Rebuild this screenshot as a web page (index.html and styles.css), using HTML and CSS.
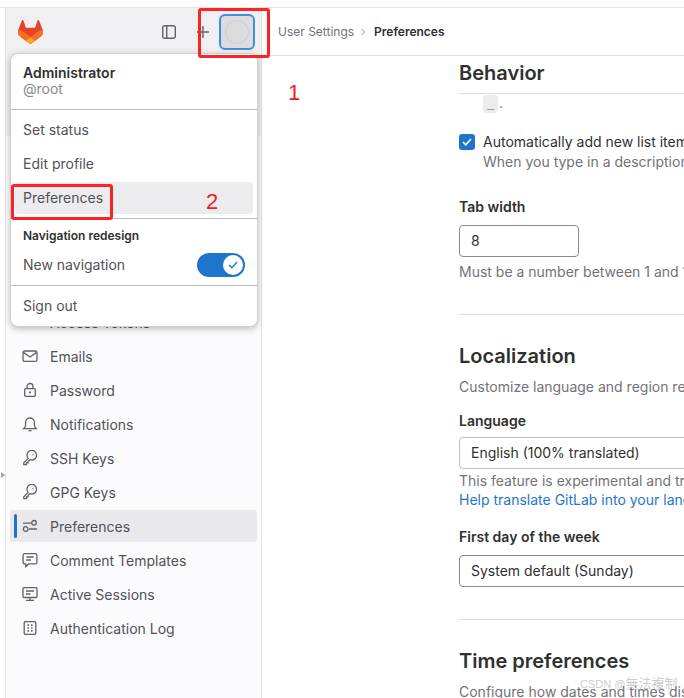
FILE: index.html
```html
<!DOCTYPE html>
<html lang="en">
<head>
  <meta charset="UTF-8">
  <meta name="viewport" content="width=device-width, initial-scale=1.0">
  <title>Preferences - User Settings</title>
  <link rel="stylesheet" href="styles.css">
</head>
<body>
  <div class="page">
    <aside class="sidebar">
      <div class="sidebar-top">
        <svg class="logo" width="25" height="24" viewBox="0 0 25 24">
          <path fill="#E24329" d="m24.507 9.5-.034-.09L21.082.562a.896.896 0 0 0-1.694.091l-2.29 7.01H7.825L5.535.653a.898.898 0 0 0-1.694-.09L.451 9.411.416 9.5a6.297 6.297 0 0 0 2.09 7.278l.012.01.03.022 5.16 3.867 2.56 1.935 1.554 1.176a1.051 1.051 0 0 0 1.268 0l1.555-1.176 2.56-1.935 5.197-3.89.014-.01A6.297 6.297 0 0 0 24.507 9.5Z"/>
          <path fill="#FC6D26" d="m24.507 9.5-.034-.09a11.44 11.44 0 0 0-4.56 2.051l-7.447 5.632 4.742 3.584 5.197-3.89.014-.01A6.297 6.297 0 0 0 24.507 9.5Z"/>
          <path fill="#FCA326" d="m7.707 20.677 2.56 1.935 1.555 1.176a1.051 1.051 0 0 0 1.268 0l1.555-1.176 2.56-1.935-4.743-3.584-4.755 3.584Z"/>
          <path fill="#FC6D26" d="M5.01 11.461a11.43 11.43 0 0 0-4.56-2.05L.416 9.5a6.297 6.297 0 0 0 2.09 7.278l.012.01.03.022 5.16 3.867 4.745-3.584-7.444-5.632Z"/>
        </svg>
        <svg class="panel-icon" width="16" height="16" viewBox="0 0 16 16" fill="none" stroke="#626168" stroke-width="1.4">
          <rect x="1.7" y="1.7" width="12.6" height="12.6" rx="2"/>
          <path d="M5.7 2v12"/>
        </svg>
        <svg class="plus-icon" width="14" height="14" viewBox="0 0 14 14" fill="none" stroke="#626168" stroke-width="1.4">
          <path d="M7 1v12M1 7h12"/>
        </svg>
        <div class="avatar-btn"><span class="avatar"></span></div>
      </div>

      <ul class="nav-list">
        <li class="nav-title">User settings</li>
        <li class="nav-item">Profile</li>
        <li class="nav-item">Account</li>
        <li class="nav-item">Applications</li>
        <li class="nav-item">Chat</li>
        <li class="nav-item">Access Tokens</li>
        <li class="nav-item">
          <svg class="nav-icon" viewBox="0 0 16 16"><rect x="1" y="3" width="14" height="10.4" rx="1.6"/><path d="M1.4 4.4 8 9l6.6-4.6"/></svg>
          Emails
        </li>
        <li class="nav-item">
          <svg class="nav-icon" viewBox="0 0 16 16"><rect x="2.7" y="6.6" width="10.6" height="7.7" rx="1"/><path d="M5 6.6V4.5a3 3 0 0 1 6 0v2.1"/><path d="M8 9.6v1.6" stroke-width="2"/></svg>
          Password
        </li>
        <li class="nav-item">
          <svg class="nav-icon" viewBox="0 0 16 16"><path d="M1.8 12.6c1.3-1 1.8-2 1.8-3.6V6.4a4.4 4.4 0 0 1 8.8 0V9c0 1.6.5 2.600 1.800 3.600z"/><path d="M6.500 14.700h3"/></svg>
          Notifications
        </li>
        <li class="nav-item">
          <svg class="nav-icon" viewBox="0 0 16 16"><path d="M6.200 8.400 1.800 12.800v1.800h2.600v-1.700h1.700v-1.700l2-1.500a4.800 4.800 0 1 0-1.900-1.300z"/><path d="M10.600 4.600h.9" stroke-width="1.800"/></svg>
          SSH Keys
        </li>
        <li class="nav-item">
          <svg class="nav-icon" viewBox="0 0 16 16"><path d="M6.200 8.400 1.800 12.800v1.800h2.600v-1.700h1.700v-1.700l2-1.500a4.800 4.800 0 1 0-1.900-1.300z"/><path d="M10.600 4.600h.9" stroke-width="1.800"/></svg>
          GPG Keys
        </li>
        <li class="nav-item active">
          <svg class="nav-icon" viewBox="0 0 16 16"><path d="M1 5.200h8M7 11h8"/><circle cx="12" cy="4.800" r="2.300"/><circle cx="3.700" cy="11" r="2.300"/></svg>
          Preferences
        </li>
        <li class="nav-item">
          <svg class="nav-icon" viewBox="0 0 16 16"><path d="M2.600 1.700h10.800a1.500 1.500 0 0 1 1.500 1.500v7.200a1.500 1.500 0 0 1-1.500 1.500H6.800l-3 2.700v-2.700H2.600a1.500 1.500 0 0 1-1.500-1.500V3.200a1.500 1.500 0 0 1 1.500-1.500z"/><path d="M4.300 5h7.400M4.300 8h4.700"/></svg>
          Comment Templates
        </li>
        <li class="nav-item">
          <svg class="nav-icon" viewBox="0 0 16 16"><rect x="1" y="1.700" width="14" height="9.800" rx="1"/><path d="M4 5h8M4 8h4.500M8 11.500V14M4 14.400h8"/></svg>
          Active Sessions
        </li>
        <li class="nav-item">
          <svg class="nav-icon" viewBox="0 0 16 16"><rect x="2.200" y="1.700" width="11.600" height="12.600" rx="1"/><path d="M5.500 5.200h1.500M9 5.200h1.500M5.500 8h1.500M9 8h1.500M5.500 10.800h1.500M9 10.800h1.500" stroke-width="1.700"/></svg>
          Authentication Log
        </li>
      </ul>
    </aside>

    <main class="main">
      <div class="breadcrumbs">
        <span class="crumb">User Settings</span>
        <svg class="crumb-sep" width="6" height="8" viewBox="0 0 6 8" fill="none" stroke="#8f8e94" stroke-width="1"><path d="M1.500 1 4.500 4 1.500 7"/></svg>
        <span class="crumb-current">Preferences</span>
      </div>

      <div class="content">
        <div class="sticky-title"><h2>Behavior</h2></div>
        <div class="code-line"><code>_</code>.</div>

        <div class="check-row">
          <span class="checkbox">
            <svg width="10" height="8" viewBox="0 0 10 8" fill="none" stroke="#fff" stroke-width="1.600"><path d="M1 4l2.800 2.800L9 1"/></svg>
          </span>
          <div>
            <div class="check-label">Automatically add new list items</div>
            <div class="hint">When you type in a description or comment box, pressing Enter in a list adds a new item below.</div>
          </div>
        </div>

        <label class="field-label tab-label">Tab width</label>
        <div class="input tab-input">8</div>
        <p class="hint tab-hint">Must be a number between 1 and 12. The default is 8.</p>

        <hr class="divider first">

        <h2 class="section-title">Localization</h2>
        <p class="hint section-desc">Customize language and region related settings.</p>

        <label class="field-label lang-label">Language</label>
        <div class="input select light">English (100% translated)</div>
        <p class="hint lang-hint">This feature is experimental and translations are not complete yet.</p>
        <a class="link" href="#">Help translate GitLab into your language.</a>

        <label class="field-label day-label">First day of the week</label>
        <div class="input select">System default (Sunday)</div>

        <hr class="divider second">

        <h2 class="section-title">Time preferences</h2>
        <p class="hint section-desc">Configure how dates and times display for you.</p>
      </div>
    </main>

    <!-- user dropdown, sits over the sidebar -->
    <div class="user-menu">
      <div class="menu-head">
        <div class="menu-name">Administrator</div>
        <div class="menu-handle">@root</div>
      </div>
      <div class="menu-group menu-links">
        <div class="menu-item">Set status</div>
        <div class="menu-item">Edit profile</div>
        <div class="menu-item hover">Preferences</div>
      </div>
      <div class="menu-group nav-group">
        <div class="menu-label">Navigation redesign</div>
        <div class="menu-item toggle-row">
          New navigation
          <span class="toggle">
            <span class="knob">
              <svg width="10" height="8" viewBox="0 0 10 8" fill="none" stroke="#1f75cb" stroke-width="1.300"><path d="M1 4l2.800 2.800L9 1"/></svg>
            </span>
          </span>
        </div>
      </div>
      <div class="menu-group last">
        <div class="menu-item">Sign out</div>
      </div>
    </div>

    <!-- screenshot annotations -->
    <div class="mark mark-avatar"></div>
    <div class="mark mark-pref"></div>
    <span class="mark-num num-one">1</span>
    <span class="mark-num num-two">2</span>
    <span class="collapse-arrow"></span>
    <span class="watermark">CSDN @<span class="watermark-cjk">無法複制</span></span>
  </div>
</body>
</html>
```

FILE: styles.css
```css
* {
  box-sizing: border-box;
}
html, body {
  margin: 0;
  padding: 0;
  background: #fff;
}
body {
  font-family: Inter, "Noto Sans", sans-serif;
  font-size: 14px;
  color: #303030;
}
.page {
  position: relative;
  display: flex;
  width: 684px;
  height: 698px;
  overflow: hidden;
  padding: 7px 0 0 5px;
}
.page::before {
  content: "";
  position: absolute;
  top: 7px;
  left: 0;
  right: 0;
  height: 1px;
  background: #e4e4e6;
}

/* sidebar */
.sidebar {
  flex: none;
  width: 257px;
  margin-top: 1px;
  background: #fbfafd;
  border-left: 1px solid #e4e4e6;
  border-right: 1px solid #e4e4e6;
}
.sidebar-top {
  display: flex;
  align-items: center;
  height: 128px;
  padding: 0 0 80px 12px;
  background: #f0f0f2;
}
.logo {
  flex: none;
}
.panel-icon {
  margin-left: 118px;
}
.plus-icon {
  margin-left: 19px;
}
.avatar-btn {
  display: flex;
  align-items: center;
  justify-content: center;
  width: 36px;
  height: 36px;
  margin-left: 9px;
  background: #dcdcde;
  border: 2px solid #428fdc;
  border-radius: 6px;
}
.avatar {
  width: 24px;
  height: 24px;
  background: #dcdcde;
  border: 1px solid #cfcfd3;
  border-radius: 50%;
}
.nav-list {
  list-style: none;
  margin: 0;
  padding: 0 4px;
}
.nav-title {
  height: 34px;
}
.nav-item {
  position: relative;
  display: flex;
  align-items: center;
  height: 32px;
  margin-bottom: 2px;
  padding: 1px 0 0 40px;
  border-radius: 4px;
  color: #535158;
}
.nav-icon {
  position: absolute;
  left: 12px;
  top: 8px;
  width: 16px;
  height: 16px;
  fill: none;
  stroke: #626168;
  stroke-width: 1.300;
}
.nav-item.active {
  background: #e9e9ec;
}
.nav-item.active::before {
  content: "";
  position: absolute;
  left: 4px;
  top: 4px;
  width: 3px;
  height: 24px;
  background: #1f75cb;
  border-radius: 2px;
}

/* main column */
.main {
  flex: 1;
  min-width: 0;
  margin-top: 1px;
}
.breadcrumbs {
  display: flex;
  align-items: center;
  height: 48px;
  padding-left: 16px;
  border-bottom: 1px solid #e0e0e2;
  font-size: 12px;
}
.crumb {
  color: #737278;
}
.crumb-sep {
  margin: 0 8px 0 6px;
}
.crumb-current {
  font-weight: 600;
  color: #303030;
}
.content {
  width: 222px;
  margin-left: 197px;
  white-space: nowrap;
}
h2 {
  margin: 0;
  font-size: 20px;
  font-weight: 600;
  line-height: 26px;
  color: #303030;
}
.sticky-title {
  width: 400px;
  height: 38px;
  padding-top: 4px;
  border-bottom: 1px solid #dcdcde;
}
.code-line {
  height: 18px;
  padding-left: 24px;
  line-height: 18px;
  color: #737278;
}
code {
  display: inline-block;
  width: 15px;
  height: 18px;
  margin-right: 1px;
  background: #ececef;
  border-radius: 4px;
  font-family: "Liberation Mono", monospace;
  font-size: 12px;
  text-align: center;
  line-height: 20px;
}
.check-row {
  display: flex;
  gap: 8px;
  margin-top: 20px;
}
.checkbox {
  flex: none;
  display: flex;
  align-items: center;
  justify-content: center;
  width: 16px;
  height: 16px;
  margin-top: 2px;
  background: #1f75cb;
  border-radius: 3px;
}
.check-label {
  line-height: 20px;
  color: #303030;
}
.hint {
  margin: 0;
  line-height: 20px;
  color: #737278;
}
.field-label {
  display: block;
  font-weight: 600;
  line-height: 20px;
  color: #303030;
}
.tab-label {
  margin-top: 25px;
}
.input {
  height: 32px;
  padding: 0 11px;
  background: #fff;
  border: 1px solid #89888d;
  border-radius: 4px;
  line-height: 30px;
  color: #303030;
}
.tab-input {
  width: 120px;
  margin-top: 8px;
}
.tab-hint {
  margin-top: 5px;
}
.divider {
  width: 400px;
  margin: 0;
  border: 0;
  border-top: 1px solid #dcdcde;
}
.divider.first {
  margin-top: 32px;
}
.divider.second {
  margin-top: 32px;
}
.section-title {
  margin-top: 28px;
}
.section-desc {
  margin-top: 8px;
}
.lang-label {
  margin-top: 14px;
}
.select {
  width: 400px;
  margin-top: 6px;
}
.select.light {
  border-color: #bfbfc3;
}
.lang-hint {
  margin-top: 2px;
}
.link {
  display: block;
  margin-top: -1px;
  line-height: 20px;
  color: #1f75cb;
  text-decoration: none;
}
.day-label {
  margin-top: 17px;
}
.select:not(.light) {
  margin-top: 8px;
}

/* user dropdown */
.user-menu {
  position: absolute;
  left: 10px;
  top: 53px;
  width: 248px;
  height: 274px;
  background: #fff;
  border: 1px solid #d0d0d3;
  border-radius: 8px;
  box-shadow: 0 2px 6px rgba(0, 0, 0, 0.25);
  color: #535158;
}
.menu-head {
  height: 56px;
  padding: 11px 12px 0;
  border-bottom: 1px solid #bfbfc3;
}
.menu-name {
  font-weight: 600;
  line-height: 16px;
  color: #303030;
}
.menu-handle {
  line-height: 16px;
  color: #89888d;
}
.menu-group {
  padding: 3px 4px 5px;
  border-bottom: 1px solid #bfbfc3;
}
.menu-item {
  display: flex;
  align-items: center;
  height: 32px;
  margin-bottom: 2px;
  padding: 0 8px;
  border-radius: 4px;
}
.menu-group .menu-item:last-child {
  margin-bottom: 0;
}
.menu-links {
  padding: 4px 4px;
}
.menu-links .menu-item {
  padding-bottom: 2px;
}
.menu-group.last {
  padding-top: 3px;
  border-bottom: 0;
}
.menu-item.hover {
  background: #ececef;
}
.nav-group {
  padding-top: 8px;
}
.menu-label {
  padding: 0 8px;
  font-size: 12px;
  font-weight: 600;
  line-height: 18px;
  height: 21px;
  color: #303030;
}
.toggle-row {
  justify-content: space-between;
}
.toggle {
  display: flex;
  align-items: center;
  justify-content: flex-end;
  width: 48px;
  height: 24px;
  margin-top: 2px;
  padding-right: 2px;
  background: #1f75cb;
  border-radius: 12px;
}
.knob {
  display: flex;
  align-items: center;
  justify-content: center;
  width: 20px;
  height: 20px;
  background: #fff;
  border-radius: 50%;
}

/* annotations drawn on the screenshot */
.mark {
  position: absolute;
  border: 3px solid #fb2323;
  border-radius: 3px;
}
.mark-avatar {
  left: 198px;
  top: 8px;
  width: 72px;
  height: 50px;
}
.mark-pref {
  left: 11px;
  top: 184px;
  width: 102px;
  height: 36px;
}
.mark-num {
  position: absolute;
  font-family: "Liberation Sans", sans-serif;
  font-size: 22px;
  line-height: 24px;
  color: #f01c1c;
}
.num-one {
  left: 288px;
  top: 81px;
}
.num-two {
  left: 206px;
  top: 190px;
}
.collapse-arrow {
  position: absolute;
  left: 1px;
  top: 472px;
  border-left: 4px solid #a0a0a3;
  border-top: 3px solid transparent;
  border-bottom: 3px solid transparent;
}
.watermark {
  position: absolute;
  left: 580px;
  top: 675px;
  font-family: "Liberation Sans", sans-serif;
  font-size: 11px;
  line-height: 16px;
  color: rgba(120, 120, 120, 0.4);
  white-space: nowrap;
}
.watermark-cjk {
  font-family: "Noto Sans CJK TC", sans-serif;
  font-size: 13px;
}
```
